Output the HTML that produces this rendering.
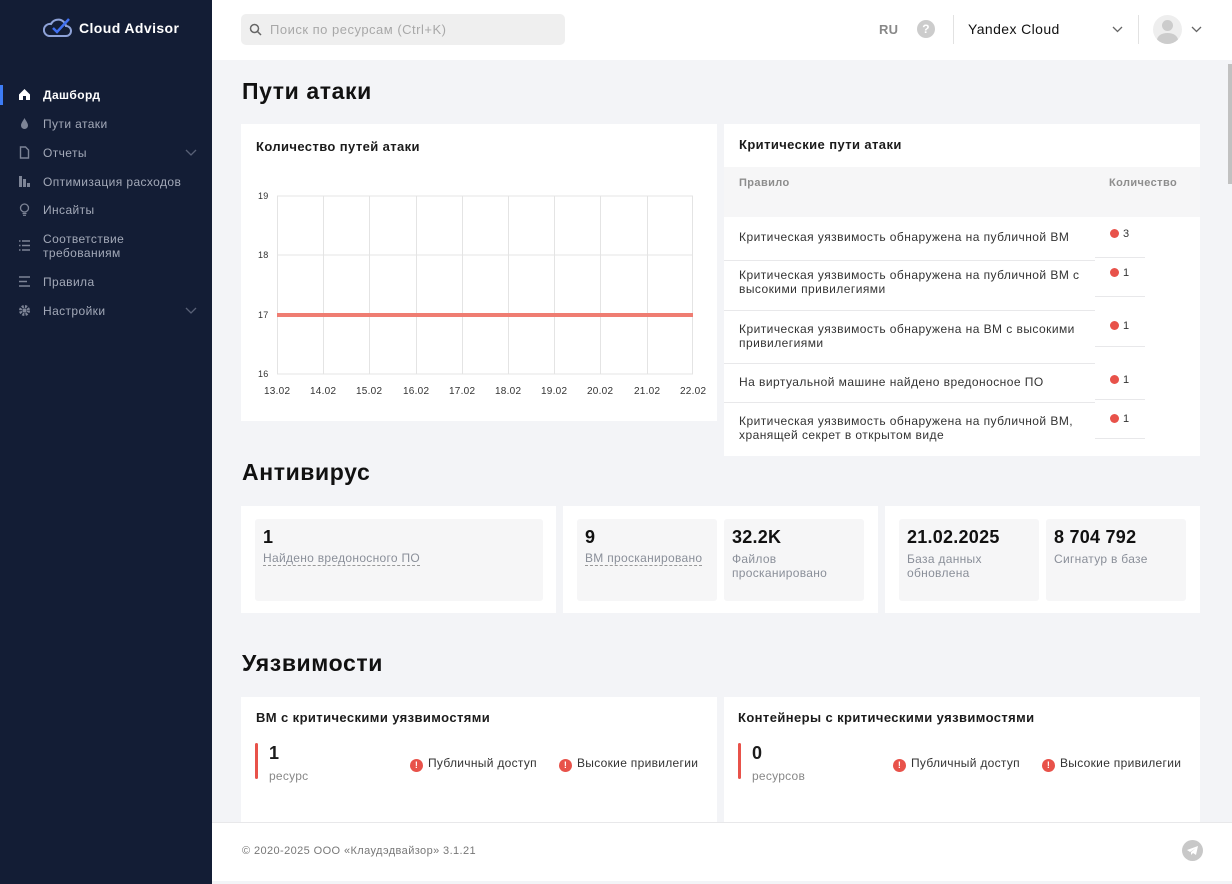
<!DOCTYPE html>
<html><head><meta charset="utf-8"><style>
*{box-sizing:border-box;margin:0;padding:0}
body{width:1232px;height:884px;overflow:hidden;font-family:"Liberation Sans",sans-serif;background:#f3f4f7;position:relative;color:#1b1b1b;letter-spacing:0.25px}
.a{position:absolute}
#sb{left:0;top:0;width:212px;height:884px;background:#131d35}
.ni{position:absolute;left:43px;font-size:12px;color:#a3a9b8;letter-spacing:0.4px}
.ic{position:absolute;left:18px;width:13px;height:13px}
.card{position:absolute;background:#fff}
.h1{position:absolute;left:242px;font-size:23px;font-weight:bold;color:#111;letter-spacing:0.6px}
.t{font-size:13px;font-weight:bold;color:#1b1b1b;position:absolute;letter-spacing:0.4px}
.box{position:absolute;background:#f6f6f7;border-radius:3px}
.big{position:absolute;left:8px;top:8px;font-size:18px;font-weight:bold;color:#111}
.lbl{position:absolute;left:8px;top:33px;font-size:12px;color:#8a8f99;line-height:14px;letter-spacing:0.3px}
.row{position:absolute;left:15px;font-size:12px;color:#333;line-height:14px;letter-spacing:0.45px}
.cnt{position:absolute;left:386px;font-size:11px;color:#333}
.cnt:before{content:"";display:inline-block;width:9px;height:9px;border-radius:50%;background:#e8524a;margin-right:4px;vertical-align:-1px}
.hl{position:absolute;height:1px;background:#e8e8ea}
.gy{position:absolute;font-size:9px;color:#333}
.gx{position:absolute;top:386px;font-size:10px;color:#333}
.warn{position:absolute;font-size:12px;color:#333;letter-spacing:0.3px}
.warn:before{content:"!";display:inline-block;width:13px;height:13px;border-radius:50%;background:#e8524a;color:#fff;font-size:9px;font-weight:bold;text-align:center;line-height:13px;margin-right:5px;vertical-align:-1px}
</style></head><body>
<div id="sb" class="a">
<svg class="a" style="left:43px;top:16px" width="30" height="22" viewBox="0 0 30 22"><path d="M6 20h17a5 5 0 0 0 0-10 8 8 0 0 0-15-2A6 6 0 0 0 6 20z" fill="none" stroke="#8ea2d8" stroke-width="2"/><path d="M10 12l4 4 12-13" fill="none" stroke="#3f6ff0" stroke-width="2.5"/></svg>
<div class="a" style="left:79px;top:20px;font-size:14px;font-weight:bold;color:#fff;letter-spacing:0.4px">Cloud Advisor</div>
<div class="a" style="left:0;top:85px;width:3px;height:20px;background:#3d7cf5"></div>
<svg class="ic" style="top:88px" viewBox="0 0 13 13"><path d="M1 6.5L6.5 1 12 6.5V12H1z" fill="#fff"/><rect x="5" y="8" width="3" height="4" fill="#131d35"/></svg>
<div class="ni" style="top:88px;color:#fff;font-weight:bold">Дашборд</div>
<svg class="ic" style="top:117px" viewBox="0 0 13 13"><path d="M6.5 1C8 4 10 6 10 8.5a3.5 3.5 0 0 1-7 0C3 6 5 4 6.5 1z" fill="#7d8496"/></svg>
<div class="ni" style="top:117px">Пути атаки</div>
<svg class="ic" style="top:146px" viewBox="0 0 13 13"><path d="M2.5 1h5l3 3v8h-8z" fill="none" stroke="#7d8496" stroke-width="1.4"/></svg>
<div class="ni" style="top:146px">Отчеты</div>
<svg class="a" style="left:185px;top:149px" width="12" height="8"><path d="M1 1l5 5 5-5" fill="none" stroke="#586076" stroke-width="1.3"/></svg>
<svg class="ic" style="top:175px" viewBox="0 0 13 13"><rect x="1" y="1" width="3" height="11" fill="#7d8496"/><rect x="5" y="4" width="3" height="8" fill="#7d8496"/><rect x="9" y="8" width="3" height="4" fill="#7d8496"/></svg>
<div class="ni" style="top:175px">Оптимизация расходов</div>
<svg class="ic" style="top:203px" viewBox="0 0 13 13"><circle cx="6.5" cy="5" r="4" fill="none" stroke="#7d8496" stroke-width="1.3"/><path d="M4.5 10.5h4M5 12.3h3" stroke="#7d8496" stroke-width="1.2"/></svg>
<div class="ni" style="top:203px">Инсайты</div>
<svg class="ic" style="top:239px" viewBox="0 0 13 13"><path d="M1 2h1.5M4 2h8M1 6.5h1.5M4 6.5h8M1 11h1.5M4 11h8" stroke="#7d8496" stroke-width="1.5"/></svg>
<div class="ni" style="top:232px;line-height:14px">Соответствие<br>требованиям</div>
<svg class="ic" style="top:275px" viewBox="0 0 13 13"><path d="M1 2h11M1 6.5h8M1 11h11" stroke="#7d8496" stroke-width="1.6"/></svg>
<div class="ni" style="top:275px">Правила</div>
<svg class="ic" style="top:304px" viewBox="0 0 13 13"><circle cx="6.5" cy="6.5" r="4" fill="none" stroke="#7d8496" stroke-width="3" stroke-dasharray="2 1.2"/><circle cx="6.5" cy="6.5" r="2" fill="#7d8496"/></svg>
<div class="ni" style="top:304px">Настройки</div>
<svg class="a" style="left:185px;top:307px" width="12" height="8"><path d="M1 1l5 5 5-5" fill="none" stroke="#586076" stroke-width="1.3"/></svg>
</div>

<div class="a" style="left:212px;top:0;width:1020px;height:60px;background:#fff"></div>
<div class="a" style="left:241px;top:14px;width:324px;height:31px;background:#efefef;border-radius:5px"></div>
<svg class="a" style="left:249px;top:23px" width="13" height="13"><circle cx="5.5" cy="5.5" r="4" fill="none" stroke="#666" stroke-width="1.5"/><path d="M8.5 8.5l3.5 3.5" stroke="#666" stroke-width="1.5"/></svg>
<div class="a" style="left:270px;top:22px;font-size:13px;color:#a8a8a8;letter-spacing:0.5px">Поиск по ресурсам (Ctrl+K)</div>
<div class="a" style="left:879px;top:22px;font-size:13px;font-weight:bold;color:#888">RU</div>
<div class="a" style="left:917px;top:20px;width:18px;height:18px;border-radius:50%;background:#ccc;color:#fff;font-size:12px;font-weight:bold;text-align:center;line-height:18px">?</div>
<div class="a" style="left:953px;top:15px;width:1px;height:29px;background:#e2e2e2"></div>
<div class="a" style="left:968px;top:21px;font-size:14px;color:#111;letter-spacing:0.4px">Yandex Cloud</div>
<svg class="a" style="left:1112px;top:26px" width="11" height="7"><path d="M1 1l4.5 4.5L10 1" fill="none" stroke="#666" stroke-width="1.3"/></svg>
<div class="a" style="left:1138px;top:15px;width:1px;height:29px;background:#e2e2e2"></div>
<div class="a" style="left:1153px;top:15px;width:29px;height:29px;border-radius:50%;background:#eee;overflow:hidden"><div class="a" style="left:9px;top:5px;width:11px;height:11px;border-radius:50%;background:#ccc"></div><div class="a" style="left:4px;top:18px;width:21px;height:14px;border-radius:50%;background:#ccc"></div></div>
<svg class="a" style="left:1191px;top:26px" width="11" height="7"><path d="M1 1l4.5 4.5L10 1" fill="none" stroke="#666" stroke-width="1.3"/></svg>
<div class="a" style="left:1228px;top:64px;width:4px;height:120px;background:#c1c1c1"></div>

<div class="h1" style="top:78px">Пути атаки</div>
<div class="card" style="left:241px;top:124px;width:476px;height:297px"></div>
<div class="t" style="left:256px;top:139px">Количество путей атаки</div>
<svg class="a" style="left:241px;top:124px" width="476" height="297">
<g stroke="#e4e4e4" stroke-width="1">
<path d="M36 72h416M36 131h416M36 191h416M36 250h416"/>
<path d="M36.5 72v178M82.5 72v178M128.5 72v178M175.5 72v178M221.5 72v178M267.5 72v178M313.5 72v178M359.5 72v178M406.5 72v178M451.5 72v178"/>
</g>
<path d="M36 191h416" stroke="#ef7d72" stroke-width="4"/>
</svg>
<div class="gy" style="left:258px;top:191px">19</div>
<div class="gy" style="left:258px;top:250px">18</div>
<div class="gy" style="left:258px;top:310px">17</div>
<div class="gy" style="left:258px;top:369px">16</div>
<div class="gx" style="left:264px">13.02</div><div class="gx" style="left:310px">14.02</div><div class="gx" style="left:356px">15.02</div><div class="gx" style="left:403px">16.02</div><div class="gx" style="left:449px">17.02</div><div class="gx" style="left:495px">18.02</div><div class="gx" style="left:541px">19.02</div><div class="gx" style="left:587px">20.02</div><div class="gx" style="left:634px">21.02</div><div class="gx" style="left:680px">22.02</div>

<div class="card" style="left:724px;top:124px;width:476px;height:332px">
<div class="t" style="left:15px;top:13px">Критические пути атаки</div>
<div class="a" style="left:0;top:43px;width:476px;height:50px;background:#f6f6f7"></div>
<div class="a" style="left:15px;top:53px;font-size:11px;font-weight:bold;color:#8d8d8d;letter-spacing:0.4px">Правило</div>
<div class="a" style="left:385px;top:53px;font-size:11px;font-weight:bold;color:#8d8d8d;letter-spacing:0.4px">Количество</div>
<div class="row" style="top:106px">Критическая уязвимость обнаружена на публичной ВМ</div>
<div class="cnt" style="top:104px">3</div>
<div class="hl" style="left:0;top:136px;width:371px"></div><div class="hl" style="left:371px;top:133px;width:50px"></div>
<div class="row" style="top:144px">Критическая уязвимость обнаружена на публичной ВМ с<br>высокими привилегиями</div>
<div class="cnt" style="top:143px">1</div>
<div class="hl" style="left:0;top:186px;width:371px"></div><div class="hl" style="left:371px;top:172px;width:50px"></div>
<div class="row" style="top:198px">Критическая уязвимость обнаружена на ВМ с высокими<br>привилегиями</div>
<div class="cnt" style="top:196px">1</div>
<div class="hl" style="left:0;top:239px;width:371px"></div><div class="hl" style="left:371px;top:222px;width:50px"></div>
<div class="row" style="top:251px">На виртуальной машине найдено вредоносное ПО</div>
<div class="cnt" style="top:250px">1</div>
<div class="hl" style="left:0;top:278px;width:371px"></div><div class="hl" style="left:371px;top:275px;width:50px"></div>
<div class="row" style="top:290px">Критическая уязвимость обнаружена на публичной ВМ,<br>хранящей секрет в открытом виде</div>
<div class="cnt" style="top:289px">1</div>
<div class="hl" style="left:371px;top:314px;width:50px"></div>
</div>

<div class="h1" style="top:459px">Антивирус</div>
<div class="card" style="left:241px;top:506px;width:315px;height:107px"><div class="box" style="left:14px;top:13px;width:288px;height:82px"><div class="big">1</div><div class="lbl" style="border-bottom:1px dashed #999;line-height:13px">Найдено вредоносного ПО</div></div></div>
<div class="card" style="left:563px;top:506px;width:315px;height:107px">
<div class="box" style="left:14px;top:13px;width:140px;height:82px"><div class="big">9</div><div class="lbl" style="border-bottom:1px dashed #999;line-height:13px">ВМ просканировано</div></div>
<div class="box" style="left:161px;top:13px;width:140px;height:82px"><div class="big">32.2K</div><div class="lbl">Файлов<br>просканировано</div></div></div>
<div class="card" style="left:885px;top:506px;width:315px;height:107px">
<div class="box" style="left:14px;top:13px;width:140px;height:82px"><div class="big">21.02.2025</div><div class="lbl">База данных<br>обновлена</div></div>
<div class="box" style="left:161px;top:13px;width:140px;height:82px"><div class="big">8 704 792</div><div class="lbl">Сигнатур в базе</div></div></div>

<div class="h1" style="top:650px">Уязвимости</div>
<div class="card" style="left:241px;top:697px;width:476px;height:130px">
<div class="t" style="left:15px;top:13px">ВМ с критическими уязвимостями</div>
<div class="a" style="left:14px;top:46px;width:3px;height:36px;background:#e8524a;border-radius:2px"></div>
<div class="a" style="left:28px;top:46px;font-size:18px;font-weight:bold">1</div>
<div class="a" style="left:28px;top:72px;font-size:12px;color:#888">ресурс</div>
<div class="warn" style="left:169px;top:59px">Публичный доступ</div>
<div class="warn" style="left:318px;top:59px">Высокие привилегии</div>
</div>
<div class="card" style="left:724px;top:697px;width:476px;height:130px">
<div class="t" style="left:14px;top:13px">Контейнеры с критическими уязвимостями</div>
<div class="a" style="left:14px;top:46px;width:3px;height:36px;background:#e8524a;border-radius:2px"></div>
<div class="a" style="left:28px;top:46px;font-size:18px;font-weight:bold">0</div>
<div class="a" style="left:28px;top:72px;font-size:12px;color:#888">ресурсов</div>
<div class="warn" style="left:169px;top:59px">Публичный доступ</div>
<div class="warn" style="left:318px;top:59px">Высокие привилегии</div>
</div>
<div class="a" style="left:212px;top:822px;width:1020px;height:59px;background:#fff;border-top:1px solid #e8e8ea"></div>
<div class="a" style="left:242px;top:845px;font-size:11px;color:#777;letter-spacing:0.4px">© 2020-2025 ООО «Клаудэдвайзор» 3.1.21</div>
<div class="a" style="left:1182px;top:840px;width:21px;height:21px;border-radius:50%;background:#c8c8c8"></div>
<svg class="a" style="left:1186px;top:845px" width="13" height="11"><path d="M1 5l11-4-2 9-3-2-2 2V7l5-4-6 4z" fill="#fff"/></svg>
</body></html>
